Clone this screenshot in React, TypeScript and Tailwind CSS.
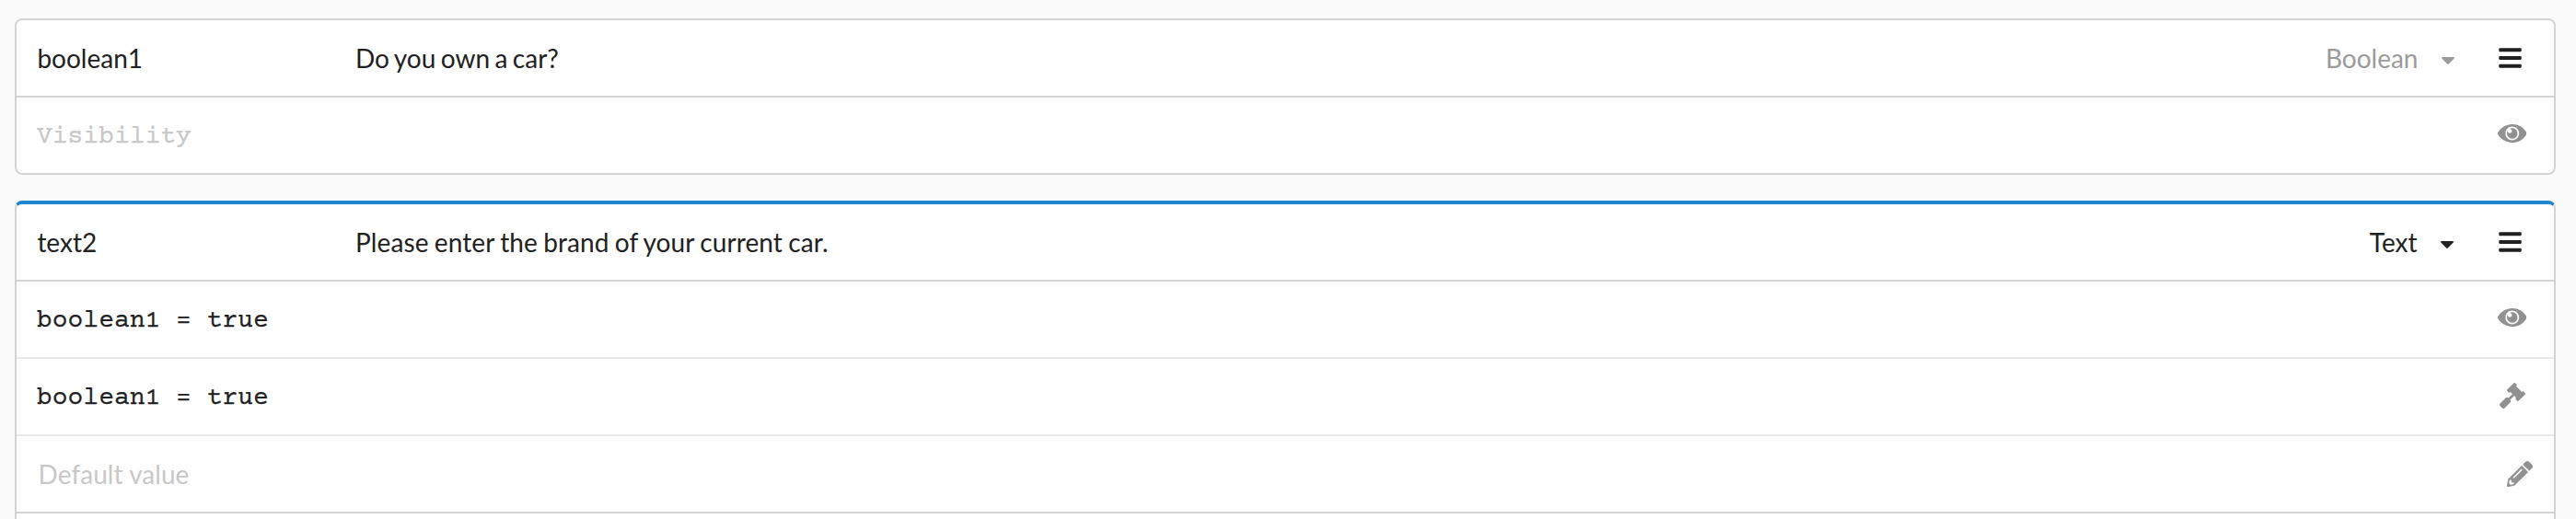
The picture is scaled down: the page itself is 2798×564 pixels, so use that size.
import type { ReactNode } from "react";
import { FaBars, FaGavel, FaPencilAlt } from "react-icons/fa";

function EyeIcon() {
  return (
    <svg viewBox="0 0 576 512" className="mb-1 h-7 w-[31.5px]" fill="currentColor">
      <path d="M569.354 231.631C512.969 135.949 407.81 72 288 72 168.14 72 63.004 135.994 6.646 231.631a47.999 47.999 0 0 0 0 48.739C63.031 376.051 168.19 440 288 440c119.86 0 224.996-63.994 281.354-159.631a47.997 47.997 0 0 0 0-48.738zM288 392c-75.162 0-136-60.827-136-136 0-75.162 60.826-136 136-136 75.162 0 136 60.826 136 136 0 75.162-60.826 136-136 136zm104-136c0 57.438-46.562 104-104 104s-104-46.562-104-104c0-17.708 4.431-34.379 12.236-48.973l-.001.032c0 23.651 19.173 42.823 42.824 42.823s42.824-19.173 42.824-42.823c0-23.651-19.173-42.824-42.824-42.824l-.032.001C253.621 156.431 270.292 152 288 152c57.438 0 104 46.562 104 104z" />
    </svg>
  );
}

function CaretIcon() {
  return (
    <svg viewBox="0 0 14 8" className="mt-[5px] h-2 w-3.5" fill="currentColor">
      <path d="M.9 0h12.2c.8 0 1.2.9.6 1.5L7.8 7.5c-.5.5-1.1.5-1.6 0L.3 1.5C-.3.9.1 0 .9 0z" />
    </svg>
  );
}

type HeaderProps = { name: string; question: string; type: string; spacing: string; muted?: boolean };

function Header({ name, question, type, spacing, muted = false }: HeaderProps) {
  return (
    <div className="flex h-[82px] items-center pr-[35px] pl-[22.4px]">
      <span className="w-[345.6px]">{name}</span>
      <span className={`flex-1 ${spacing}`}>{question}</span>
      <div className={muted ? "flex items-center gap-[25px] text-[#9b9b9b]" : "mr-px flex items-center gap-[25px]"}>
        <span>{type}</span>
        <CaretIcon />
      </div>
      <FaBars className="ml-[48.5px] h-7 w-[25px]" />
    </div>
  );
}

function Row({ icon, border, className, children }: { icon: ReactNode; border: string; className: string; children: ReactNode }) {
  return (
    <div className={`flex h-[84px] items-center justify-between border-t-2 pl-[22px] ${border} ${className}`}>
      {children}
      <span className="text-[#919191]">{icon}</span>
    </div>
  );
}

const mono = "pt-[3px] font-['Courier_Prime','Courier_10_Pitch','Liberation_Mono',monospace] [-webkit-text-stroke:0.25px_currentColor]";

export default function App() {
  return (
    <main className="flex h-[564px] flex-col gap-7 overflow-hidden bg-[#fafafa] px-4 pt-5 pr-[22px] font-['Lato',sans-serif] text-[28px] leading-10 text-[#212121]">
      <section className="shrink-0 rounded-lg border-2 border-[#d4d4d5] bg-white">
        <Header name="boolean1" question="Do you own a car?" type="Boolean" spacing="[word-spacing:-1.7px]" muted />
        <Row border="border-[#d4d4d5]" className="pr-[30px]" icon={<EyeIcon />}>
          <span className={`text-[#c8c8c8] ${mono}`}>Visibility</span>
        </Row>
      </section>
      <section className="h-[400px] shrink-0 rounded-lg border-2 border-t-4 border-[#d4d4d5] border-t-[#2185d0] bg-white">
        <Header name="text2" question="Please enter the brand of your current car." type="Text" spacing="tracking-[0.1px] [word-spacing:-1px]" />
        <Row border="border-[#d4d4d5]" className="pr-[30px]" icon={<EyeIcon />}>
          <span className={mono}>boolean1 = true</span>
        </Row>
        <Row border="border-[#e8e8e9]" className="pr-[31px]" icon={<FaGavel className="mb-[3px] size-7" />}>
          <span className={mono}>boolean1 = true</span>
        </Row>
        <Row border="border-[#e8e8e9]" className="pr-[23px]" icon={<FaPencilAlt className="size-7" />}>
          <span className="pl-[1.6px] tracking-[0.05px] text-[#c8c8c8]">Default value</span>
        </Row>
        <div className="border-t-2 border-[#d4d4d5]" />
      </section>
    </main>
  );
}
